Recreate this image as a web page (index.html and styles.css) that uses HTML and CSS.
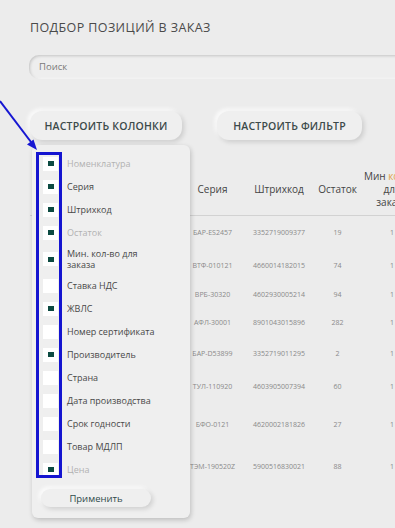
FILE: index.html
```html
<!DOCTYPE html>
<html lang="ru">
<head>
  <meta charset="UTF-8">
  <meta name="viewport" content="width=device-width, initial-scale=1">
  <title>Подбор позиций в заказ</title>
  <link rel="stylesheet" href="styles.css">
</head>
<body>

  <div class="page">
    <h1 class="title">ПОДБОР ПОЗИЦИЙ В ЗАКАЗ</h1>

    <div class="search">Поиск</div>

    <div class="actions">
      <button class="btn btn-cols">НАСТРОИТЬ КОЛОНКИ</button>
      <button class="btn btn-filter">НАСТРОИТЬ ФИЛЬТР</button>
    </div>

    <!-- таблица позиций -->
    <table class="grid">
      <colgroup>
        <col class="c-name">
        <col class="c-series">
        <col class="c-code">
        <col class="c-rest">
        <col class="c-min">
      </colgroup>
      <thead>
        <tr>
          <th>Номенклатура</th>
          <th>Серия</th>
          <th>Штрихкод</th>
          <th>Остаток</th>
          <th>Мин <span class="accent">кол-во</span><br>для<br>заказа</th>
        </tr>
      </thead>
      <tbody>
        <tr class="h34"><td>Бромгексин</td><td>БАР-ES2457</td><td>3352719009377</td><td>19</td><td>1</td></tr>
        <tr class="h32"><td>Валидол</td><td>ВТФ-010121</td><td>4660014182015</td><td>74</td><td>1</td></tr>
        <tr class="h26"><td>Ворсин</td><td>ВРБ-30320</td><td>4602930005214</td><td>94</td><td>1</td></tr>
        <tr class="h30"><td>Аспирин</td><td>АФЛ-30001</td><td>8901043015896</td><td>282</td><td>1</td></tr>
        <tr class="h32"><td>Бепантен</td><td>БАР-D53899</td><td>3352719011295</td><td>2</td><td>1</td></tr>
        <tr class="h34"><td>Тулсин</td><td>ТУЛ-110920</td><td>4603905007394</td><td>60</td><td>1</td></tr>
        <tr class="h42"><td>Бифоам</td><td>БФО-0121</td><td>4620002181826</td><td>27</td><td>1</td></tr>
        <tr class="h42"><td>Тэмпалгин</td><td>ТЭМ-190520Z</td><td>5900516830021</td><td>88</td><td>1</td></tr>
      </tbody>
    </table>
  </div>

  <!-- окно настройки колонок -->
  <div class="popup">
    <ul class="cols">
      <li class="off"><span class="check on"></span>Номенклатура</li>
      <li><span class="check on"></span>Серия</li>
      <li><span class="check on"></span>Штрихкод</li>
      <li class="off"><span class="check on"></span>Остаток</li>
      <li><span class="check on"></span><span class="lbl">Мин. кол-во для заказа</span></li>
      <li><span class="check"></span>Ставка НДС</li>
      <li><span class="check on"></span>ЖВЛС</li>
      <li><span class="check"></span>Номер сертификата</li>
      <li><span class="check on"></span>Производитель</li>
      <li><span class="check"></span>Страна</li>
      <li><span class="check"></span>Дата производства</li>
      <li><span class="check"></span>Срок годности</li>
      <li><span class="check"></span>Товар МДЛП</li>
      <li class="off"><span class="check on"></span>Цена</li>
    </ul>
    <button class="btn btn-apply">Применить</button>
  </div>

  <!-- пометка -->
  <div class="mark"></div>
  <svg class="arrow" width="45" height="55" viewBox="0 0 45 55">
    <line x1="0" y1="1" x2="31" y2="42" stroke="#1616d2" stroke-width="2"/>
    <polygon points="37,50 27,44.5 33.5,39.5" fill="#1616d2"/>
  </svg>

</body>
</html>
```

FILE: styles.css
```css
/* общие */
body {
  margin: 0;
  width: 395px;
  height: 528px;
  overflow: hidden;
  position: relative;
  background: #ececec;
  font-family: 'Open Sans', 'DejaVu Sans', sans-serif;
  color: #4a4a4a;
}
.page {
  padding: 19px 0 0 30px;
}
.title {
  margin: 0;
  font-size: 12.5px;
  font-weight: 500;
  letter-spacing: 0.4px;
  line-height: 17px;
  color: #4a4a4a;
}
.search {
  margin: 19px -30px 0 -1px;
  height: 24px;
  line-height: 24px;
  padding-left: 10px;
  font-size: 9.5px;
  color: #7a7a7a;
  background: #eeeeee;
  border-radius: 10px 0 0 10px;
  box-shadow: inset 1px 1px 3px rgba(0,0,0,0.18), inset -1px -1px 2px rgba(255,255,255,0.8);
}
/* кнопки */
.actions {
  display: flex;
  gap: 35px;
  margin-top: 32px;
}
.btn {
  font-family: inherit;
  border: none;
  background: #efefef;
  color: #3c4a4a;
  border-radius: 12px;
  box-shadow: 2px 2px 5px rgba(0,0,0,0.14), -2px -2px 4px rgba(255,255,255,0.9);
  padding: 0;
}
.btn-cols, .btn-filter {
  height: 29px;
  font-size: 10.5px;
  font-weight: 600;
  letter-spacing: 0.2px;
}
.btn-cols { width: 152px; }
.btn-filter { width: 145px; }
/* таблица */
.grid {
  margin-top: 24px;
  border-collapse: collapse;
  table-layout: fixed;
  width: 397px;
}
.c-name { width: 155px; }
.c-series { width: 55px; }
.c-code { width: 78px; }
.c-rest { width: 39px; }
.c-min { width: 70px; }
.grid th {
  font-size: 10px;
  font-weight: 400;
  line-height: 13px;
  padding: 6px 0;
  color: #444;
  border-bottom: 1px solid #d2d2d2;
  vertical-align: middle;
  white-space: nowrap;
}
.grid td {
  font-size: 7px;
  color: #8a8a8a;
  text-align: center;
  padding: 0;
  white-space: nowrap;
}
.accent { color: #e3a04a; }
.h26 { height: 26px; }
.h30 { height: 30px; }
.h32 { height: 32px; }
.h34 { height: 34px; }
.h42 { height: 42px; }
/* окно колонок */
.popup {
  position: absolute;
  left: 32px;
  top: 145px;
  width: 158px;
  height: 373px;
  box-sizing: border-box;
  padding: 7px 0 0 11px;
  background: #efefef;
  border-radius: 6px;
  box-shadow: 1px 2px 5px rgba(0,0,0,0.2);
}
.cols {
  list-style: none;
  margin: 0;
  padding: 0;
}
.cols li {
  display: flex;
  align-items: center;
  gap: 9px;
  min-height: 23px;
  padding: 0;
  font-size: 9px;
  line-height: 11px;
  color: #484848;
}
.cols li .lbl {
  max-width: 78px;
  padding: 4px 0;
}
.cols li.off { color: #b2b2b2; }
.check {
  flex: none;
  width: 15px;
  height: 14px;
  background: #fff;
  display: flex;
  align-items: center;
  justify-content: center;
}
.check.on::after {
  content: "";
  width: 6px;
  height: 5px;
  background: #0c4a41;
}
.btn-apply {
  display: block;
  margin: 8px 0 0 -2px;
  width: 110px;
  height: 18px;
  font-size: 9.5px;
  border-radius: 10px;
  color: #2f4b4b;
}
/* синяя пометка */
.mark {
  position: absolute;
  left: 36px;
  top: 152px;
  width: 26px;
  height: 326px;
  box-sizing: border-box;
  border: 3px solid #1414d0;
}
.arrow {
  position: absolute;
  left: 0;
  top: 100px;
}
```
